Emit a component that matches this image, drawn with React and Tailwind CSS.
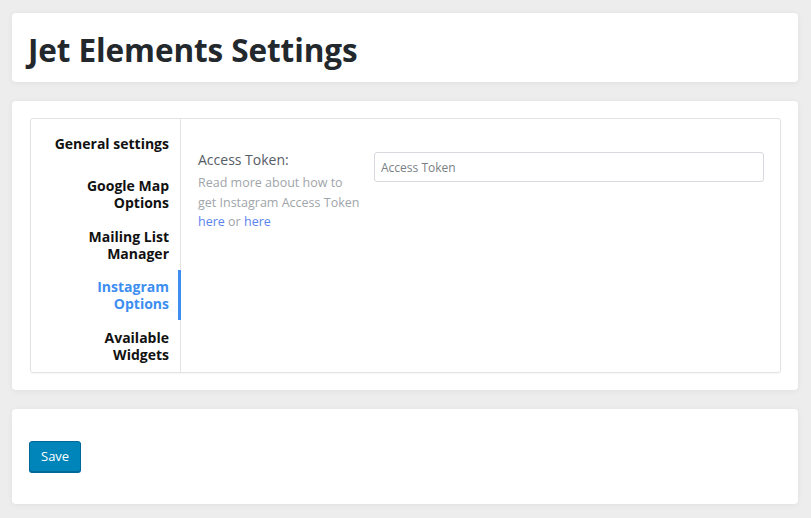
import { useState } from "react";

const tabs = [
  { id: "general", label: "General settings", h: "h-[50px]" },
  { id: "gmap", label: ["Google Map", "Options"], h: "h-[51px]" },
  { id: "mailing", label: ["Mailing List", "Manager"], h: "h-[51px]" },
  { id: "instagram", label: ["Instagram", "Options"], h: "h-[50px]" },
  { id: "widgets", label: ["Available", "Widgets"], h: "h-[52px]" },
];

export default function App() {
  const [active, setActive] = useState("instagram");
  const [token, setToken] = useState("");

  const card = "bg-white rounded-[4px] shadow-[0_1px_6px_rgba(0,0,0,0.06)]";

  return (
    <div className="min-h-[518px] bg-[#ededed] pl-[12px] pr-[13px] pt-[13px] pb-[15px] flex flex-col gap-[19px] font-['Open_Sans',sans-serif]">
      {/* Заголовок */}
      <div className={card + " h-[69px] flex items-center px-[16px]"}>
        <h1 className="text-[31.5px] font-bold text-[#23282d] tracking-[-0.1px] leading-none pt-[5px]">
          Jet Elements Settings
        </h1>
      </div>

      {/* Настройки */}
      <div className={card + " p-[17px] pl-[18px]"}>
        <div className="flex border border-[#e3e3e3] rounded-[3px] h-[255px] shadow-[0_1px_2px_rgba(0,0,0,0.04)]">
          <div className="w-[150px] border-r border-[#e3e3e3] flex flex-col">
            {tabs.map((t) => {
              const isActive = t.id === active;
              return (
                <button
                  key={t.id}
                  onClick={() => setActive(t.id)}
                  className={
                    t.h +
                    " relative flex flex-col justify-center items-end pr-[11px] text-right text-[14px] font-bold leading-[17px] " +
                    (isActive ? "text-[#3d8ef0]" : "text-[#111]")
                  }
                >
                  {Array.isArray(t.label) ? (
                    t.label.map((l) => <span key={l}>{l}</span>)
                  ) : (
                    <span>{t.label}</span>
                  )}
                  {isActive && (
                    <span className="absolute right-[-1px] top-0 bottom-0 w-[3px] bg-[#3d8ef0]" />
                  )}
                </button>
              );
            })}
          </div>

          <div className="flex-1 flex items-start pl-[17px] pr-[16px] pt-[33px]">
            <div className="w-[176px] shrink-0 -mt-[2px]">
              <div className="text-[14px] text-[#555d66] leading-[20px]">Access Token:</div>
              <p className="w-[165px] text-[12.5px] text-[#a0a5aa] leading-[19.5px] mt-[3px]">
                Read more about how to get Instagram Access Token{" "}
                <a href="#" className="text-[#5b84f0]">here</a> or{" "}
                <a href="#" className="text-[#5b84f0]">here</a>
              </p>
            </div>
            <input
              value={token}
              onChange={(e) => setToken(e.target.value)}
              placeholder="Access Token"
              className="flex-1 h-[30px] border border-[#d6d9dd] rounded-[3px] px-[6px] text-[12px] text-[#555] placeholder:text-[#7a7f85] outline-none"
            />
          </div>
        </div>
      </div>

      {/* Сохранить */}
      <div className={card + " h-[95px] flex items-center px-[17px]"}>
        <button className="h-[31px] px-[11px] bg-[#0085ba] border border-[#006799] rounded-[3px] text-white text-[13px] shadow-[0_1px_0_#006799]">
          Save
        </button>
      </div>
    </div>
  );
}
